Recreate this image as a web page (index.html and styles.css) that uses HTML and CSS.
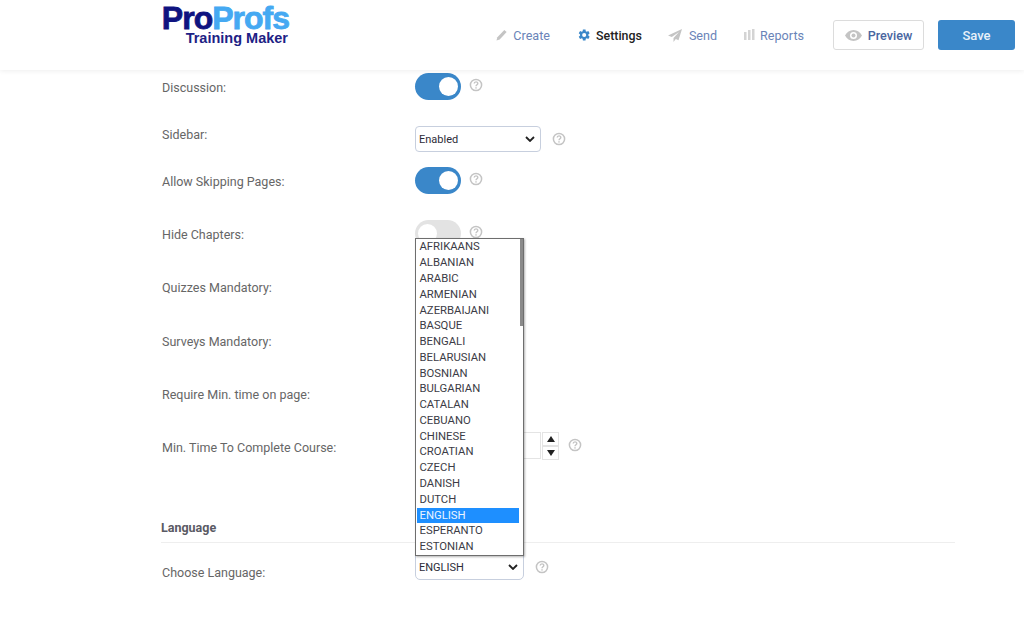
FILE: index.html
```html
<!DOCTYPE html>
<html lang="en">
<head>
    <meta charset="UTF-8">
    <meta name="viewport" content="width=device-width, initial-scale=1.0">
    <title>ProProfs Training Maker - Settings</title>
    <link rel="stylesheet" href="styles.css">
</head>
<body>
    <svg class="defs" width="0" height="0">
        <symbol id="help" viewBox="0 0 14 14">
            <circle cx="7" cy="7" r="5.6" fill="none" stroke="currentColor" stroke-width="1.500"/>
            <path d="M5.200 5.600c0-2.300 3.600-2.300 3.600-.2 0 1.300-1.800 1.300-1.800 2.900" fill="none" stroke="currentColor" stroke-width="1.400"/>
            <rect x="6.300" y="9.200" width="1.400" height="1.400" fill="currentColor"/>
        </symbol>
    </svg>

    <header class="topbar">
        <a class="logo">
            <span class="logo-main"><span class="logo-dark">Pro</span><span class="logo-light">Profs</span></span>
            <span class="logo-sub">Training Maker</span>
        </a>
        <nav class="nav">
            <a class="nav-item">
                <svg width="12" height="12" viewBox="0 0 13 13"><path d="M0.500 12.500l1-3.500 7.500-8 2.500 2.300-7.500 8z" fill="#c4c4c4"/></svg>
                Create
            </a>
            <a class="nav-item active">
                <svg width="14" height="14" viewBox="0 0 24 24"><path fill="#3a87c9" d="M19.400 13a7.500 7.500 0 0 0 0-2l2.300-1.800-2.300-3.900-2.700 1.100a7.600 7.600 0 0 0-1.700-1L14.600 2.500h-4.500l-.4 2.900a7.600 7.600 0 0 0-1.700 1L5.300 5.300 3 9.200 5.300 11a7.500 7.500 0 0 0 0 2L3 14.800l2.300 3.900 2.700-1.100a7.600 7.600 0 0 0 1.700 1l.4 2.900h4.500l.4-2.900a7.600 7.600 0 0 0 1.700-1l2.700 1.100 2.300-3.900zM12.300 15.500a3.500 3.500 0 1 1 0-7 3.500 3.500 0 0 1 0 7z"/></svg>
                Settings
            </a>
            <a class="nav-item nav-send">
                <svg width="14" height="13" viewBox="0 0 14 13"><path d="M14 0L0 6.500l3.800 1.500L11 3 5.500 9v4l2.300-3 2.700 1.200z" fill="#c4c4c4"/></svg>
                Send
            </a>
            <a class="nav-item">
                <svg width="11" height="12" viewBox="0 0 11 12"><path d="M0 3h2.500v8H0zM4 1h2.500v10H4zM8 0h2.500v11H8z" fill="#d4d4d4"/></svg>
                Reports
            </a>
        </nav>
        <button class="btn btn-preview">
            <svg width="17" height="11" viewBox="0 0 17 11"><path fill="#c4c4c4" fill-rule="evenodd" d="M8.500 0C4.800 0 1.800 2.200 0 5.500 1.800 8.800 4.800 11 8.500 11s6.700-2.200 8.500-5.500C15.200 2.200 12.200 0 8.500 0zm0 9a3.500 3.500 0 1 1 0-7 3.500 3.500 0 0 1 0 7z"/><circle cx="8.500" cy="5.500" r="2" fill="#c4c4c4"/></svg>
            Preview
        </button>
        <button class="btn btn-save">Save</button>
    </header>

    <main class="settings">
        <div class="row row-short">
            <span class="label">Discussion:</span>
            <span class="toggle on"></span>
            <svg class="help"><use href="#help"/></svg>
        </div>
        <div class="row row-short">
            <span class="label">Sidebar:</span>
            <span class="select select-wide">Enabled<svg class="chev" viewBox="0 0 10 6"><path d="M1 1l4 4 4-4" fill="none" stroke="#222" stroke-width="1.800"/></svg></span>
            <svg class="help help-select"><use href="#help"/></svg>
        </div>
        <div class="row row-short">
            <span class="label">Allow Skipping Pages:</span>
            <span class="toggle on"></span>
            <svg class="help"><use href="#help"/></svg>
        </div>
        <div class="row row-hide">
            <span class="label">Hide Chapters:</span>
            <span class="toggle"></span>
            <svg class="help"><use href="#help"/></svg>
        </div>
        <div class="row">
            <span class="label">Quizzes Mandatory:</span>
            <span class="toggle"></span>
        </div>
        <div class="row">
            <span class="label">Surveys Mandatory:</span>
            <span class="toggle"></span>
        </div>
        <div class="row">
            <span class="label">Require Min. time on page:</span>
            <span class="toggle"></span>
        </div>
        <div class="row">
            <span class="label">Min. Time To Complete Course:</span>
            <span class="time-input"></span>
            <span class="spinner">
                <span class="spin-btn"><i class="tri up"></i></span>
                <span class="spin-btn"><i class="tri down"></i></span>
            </span>
            <svg class="help help-time"><use href="#help"/></svg>
        </div>

        <h3 class="section-title">Language</h3>

        <div class="row row-lang">
            <span class="label">Choose Language:</span>
            <div class="lang-wrap">
                <ul class="lang-list">
                    <li>AFRIKAANS</li>
                    <li>ALBANIAN</li>
                    <li>ARABIC</li>
                    <li>ARMENIAN</li>
                    <li>AZERBAIJANI</li>
                    <li>BASQUE</li>
                    <li>BENGALI</li>
                    <li>BELARUSIAN</li>
                    <li>BOSNIAN</li>
                    <li>BULGARIAN</li>
                    <li>CATALAN</li>
                    <li>CEBUANO</li>
                    <li>CHINESE</li>
                    <li>CROATIAN</li>
                    <li>CZECH</li>
                    <li>DANISH</li>
                    <li>DUTCH</li>
                    <li class="selected">ENGLISH</li>
                    <li>ESPERANTO</li>
                    <li>ESTONIAN</li>
                </ul>
                <span class="scroll-thumb"></span>
                <span class="select select-lang">ENGLISH<svg class="chev" viewBox="0 0 10 6"><path d="M1 1l4 4 4-4" fill="none" stroke="#222" stroke-width="1.800"/></svg></span>
            </div>
            <svg class="help help-lang"><use href="#help"/></svg>
        </div>
    </main>
</body>
</html>
```

FILE: styles.css
```css
* {
    box-sizing: border-box;
}
body {
    margin: 0;
    height: 622px;
    overflow: hidden;
    background: #fff;
    font-family: Roboto, Arial, sans-serif;
    color: #5c5c5c;
}
.defs {
    display: block;
    height: 0;
}
.topbar {
    position: relative;
    z-index: 1;
    height: 70px;
    display: flex;
    align-items: center;
    padding: 0 9px 0 161px;
    background: #fff;
    box-shadow: 0 1px 5px rgba(0, 0, 0, 0.07);
}
.logo {
    display: flex;
    flex-direction: column;
    align-items: flex-end;
    align-self: flex-start;
    padding-top: 5px;
    width: 128px;
    flex-shrink: 0;
    font-family: "Liberation Sans", Arial, sans-serif;
    font-weight: bold;
    white-space: nowrap;
}
.logo-main {
    font-size: 32px;
    line-height: 26px;
    letter-spacing: -1px;
    -webkit-text-stroke: 0.8px;
}
.logo-dark {
    color: #0f1380;
}
.logo-light {
    color: #45a9f2;
}
.logo-sub {
    font-size: 14.5px;
    line-height: 14px;
    margin-right: 1px;
    color: #1d2285;
}
.nav {
    display: flex;
    align-items: center;
    margin-left: auto;
    gap: 27px;
}
.nav-item {
    display: flex;
    align-items: center;
    gap: 5px;
    font-size: 12.6px;
    color: #6a84b8;
}
.nav-send {
    gap: 7px;
    margin-left: -1px;
}
.nav-item.active {
    font-weight: 500;
    font-size: 12.4px;
    color: #222;
}
.btn {
    height: 30px;
    border-radius: 3px;
    font-family: Roboto, Arial, sans-serif;
    font-weight: 500;
    flex-shrink: 0;
}
.btn-preview {
    display: flex;
    align-items: center;
    justify-content: center;
    gap: 6px;
    width: 91px;
    margin-left: 29px;
    background: #fff;
    border: 1px solid #dcdcdc;
    font-size: 12.6px;
    color: #4a669f;
}
.btn-save {
    width: 77px;
    margin-left: 14px;
    background: #3a87c9;
    border: none;
    font-size: 13px;
    color: #e8f1f9;
}
.settings {
    margin: -6px 69px 0 161px;
}
.row {
    display: flex;
    align-items: center;
    height: 53.3px;
    font-size: 12.5px;
}
.row-short {
    height: 47px;
}
.row-hide {
    margin-top: 3px;
}
.label {
    width: 254px;
    padding-left: 1px;
    color: #666;
    flex-shrink: 0;
}
.toggle {
    position: relative;
    width: 46px;
    height: 27px;
    margin-top: -3px;
    border-radius: 14px;
    background: #e3e3e3;
    flex-shrink: 0;
}
.toggle::after {
    content: "";
    position: absolute;
    top: 4px;
    left: 3px;
    width: 19px;
    height: 19px;
    border-radius: 50%;
    background: #fff;
}
.toggle.on {
    background: #3a87c9;
}
.toggle.on::after {
    left: 24px;
}
.help {
    width: 14px;
    height: 14px;
    margin: -5px 0 0 8px;
    color: #c4c4c4;
}
.help-select {
    margin: 8px 0 0 11px;
}
.help-time {
    margin: -6px 0 0 9px;
}
.help-lang {
    margin: -10px 0 0 11px;
}
.select {
    display: flex;
    align-items: center;
    justify-content: space-between;
    height: 26px;
    padding: 0 4px 0 3px;
    background: #fff;
    border: 1px solid #c7cfde;
    border-radius: 4px;
    font-size: 11px;
    color: #2c2c38;
}
.select-wide {
    width: 126px;
    margin-top: 9px;
}
.chev {
    width: 10px;
    height: 6px;
    margin-right: 1px;
}
.time-input {
    width: 126px;
    height: 27px;
    margin-top: -4px;
    border: 1px solid #e4e4e4;
    flex-shrink: 0;
}
.spinner {
    display: flex;
    flex-direction: column;
    margin: -4px 0 0 1px;
}
.spin-btn {
    display: flex;
    align-items: center;
    justify-content: center;
    width: 17px;
    height: 14px;
    border: 1px solid #e4e4e4;
    background: #fff;
}
.tri {
    width: 0;
    height: 0;
    border-left: 4px solid transparent;
    border-right: 4px solid transparent;
}
.tri.up {
    border-bottom: 6px solid #222;
}
.tri.down {
    border-top: 6px solid #222;
}
.section-title {
    margin: 46px 0 0;
    padding-bottom: 7px;
    border-bottom: 1px solid #eee;
    font-size: 12.5px;
    font-weight: 700;
    line-height: 15px;
    color: #5a5a64;
}
.row-lang {
    height: 58px;
}
.lang-wrap {
    position: relative;
    margin-top: -10px;
}
.select-lang {
    width: 109px;
    height: 26px;
    border-radius: 0 0 5px 5px;
}
.lang-list {
    position: absolute;
    z-index: 1;
    left: 0;
    bottom: calc(100% - 2px);
    width: 109px;
    height: 318px;
    margin: 0;
    padding: 0 4px 0 1px;
    list-style: none;
    overflow: hidden;
    background: #fff;
    border: 1px solid #6e6e6e;
    box-shadow: 1px 1px 2px rgba(0, 0, 0, 0.3);
    font-size: 11.3px;
    color: #3c3c46;
}
.lang-list li {
    height: 15.77px;
    line-height: 15.77px;
    padding-left: 2.5px;
}
.lang-list li.selected {
    background: #1e8fff;
    color: #eaf4ff;
}
.scroll-thumb {
    position: absolute;
    z-index: 2;
    left: 105px;
    bottom: 100%;
    margin-bottom: 228px;
    width: 3px;
    height: 87px;
    background: #8a8a8a;
}
```
